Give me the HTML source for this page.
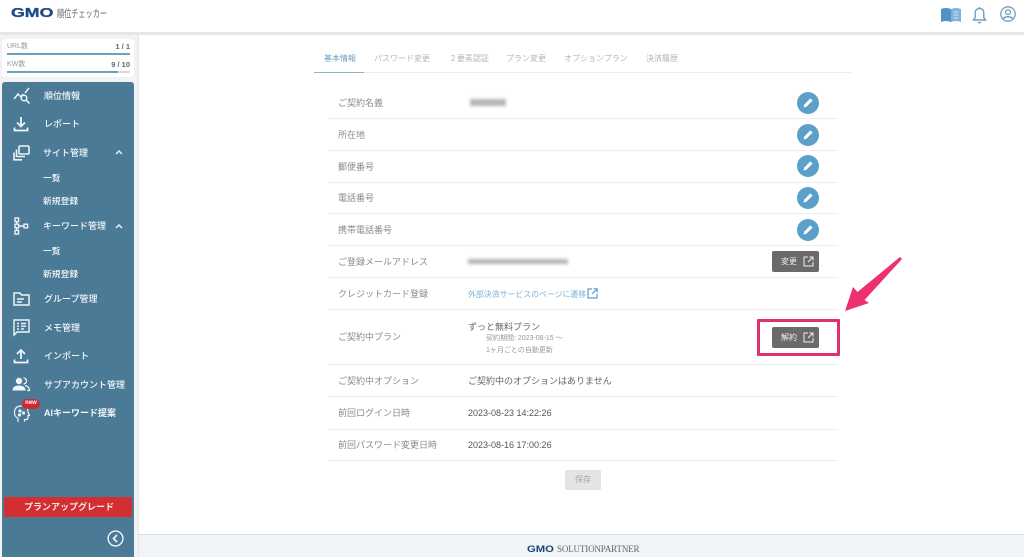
<!DOCTYPE html>
<html lang="ja"><head><meta charset="utf-8"><title>GMO順位チェッカー</title>
<style>
*{box-sizing:border-box}
html,body{margin:0;padding:0}
body{width:1024px;height:557px;overflow:hidden;position:relative;background:#fff;font-family:"Liberation Sans","Noto Sans CJK JP",sans-serif;color:#777}
.t{position:absolute;white-space:nowrap;line-height:12px}
.b{position:absolute;background:#ededed;height:1px;left:328px;width:510px}
.l{left:338px;font-size:9px;color:#8a8a8a}
.v{left:468px;font-size:9px;color:#555}
.tab{top:53px;font-size:8px;color:#b5b5b5}
.m{color:#f2f6f8;font-size:9px;font-weight:500}
.s{color:#f2f6f8;font-size:8.8px;font-weight:500}
svg{position:absolute;overflow:visible}
.pen{position:absolute;width:22px;height:22px;left:797px;border-radius:50%;background:#5c9fc9}
.btn{position:absolute;left:772px;width:47px;height:21px;background:#6a6a6a;border-radius:2px;color:#eee;font-size:8px;line-height:21px;padding-left:9px}
.blur{position:absolute;filter:blur(1.6px);background:#b5b5b5}
</style></head><body>

<!-- top bar -->
<div style="position:absolute;left:0;top:0;width:1024px;height:32px;background:#fff"></div>
<div style="position:absolute;left:0;top:32px;width:1024px;height:3px;background:#e3e7ea"></div>
<div class="t" style="left:11px;top:5px;font-size:12.5px;line-height:16px;font-weight:700;color:#1f4a83;-webkit-text-stroke:.3px #1f4a83;transform:scaleX(1.42);transform-origin:left">GMO</div>
<div class="t" style="left:57px;top:8px;font-size:10.5px;color:#666;transform:scaleX(.68);transform-origin:left">順位チェッカー</div>

<svg style="left:941px;top:7px" width="20" height="16" viewBox="0 0 20 16"><path d="M0 2 Q5 0 10 2 V15 Q5 13 0 15Z" fill="#4f94c4"/><path d="M10 2 Q15 0 20 2 V15 Q15 13 10 15Z" fill="#7fb3d6"/><path d="M12.5 5h5M12.5 8h5M12.5 11h5" stroke="#d5e6f1" stroke-width="1"/></svg>
<svg style="left:972px;top:6px" width="15" height="18" viewBox="0 0 15 18" fill="none" stroke="#6f9fbd" stroke-width="1.4"><path d="M1.5 14 H13.5 L11.8 11.5 V7 Q11.8 2.6 7.5 2.6 Q3.2 2.6 3.2 7 V11.5Z"/><path d="M6 16 Q7.5 17.6 9 16" /><path d="M7.5 1v1.5"/></svg>
<svg style="left:1000px;top:6px" width="16" height="16" viewBox="0 0 16 16" fill="none" stroke="#6f9fbd" stroke-width="1.3"><circle cx="8" cy="8" r="7.2"/><circle cx="8" cy="6.2" r="2.4"/><path d="M3 12.6 Q8 8.8 13 12.6"/></svg>

<!-- left column bg -->
<div style="position:absolute;left:0;top:35px;width:138px;height:522px;background:#f1f3f4"></div>
<div style="position:absolute;left:138px;top:35px;width:1px;height:522px;background:#e4e7e9"></div>

<!-- counters -->
<div style="position:absolute;left:2px;top:39px;width:132px;height:38px;background:#fff;border-radius:3px"></div>
<div class="t" style="left:7px;top:41px;font-size:7px;color:#999">URL数</div>
<div class="t" style="right:894px;top:41px;font-size:7.5px;font-weight:700;color:#666">1 / 1</div>
<div style="position:absolute;left:7px;top:52.5px;width:123px;height:2px;background:#6fa0bb"></div>
<div class="t" style="left:7px;top:59px;font-size:7px;color:#999">KW数</div>
<div class="t" style="right:894px;top:59px;font-size:7.5px;font-weight:700;color:#666">9 / 10</div>
<div style="position:absolute;left:7px;top:70.5px;width:111px;height:2px;background:#6fa0bb"></div>
<div style="position:absolute;left:118px;top:70.5px;width:12px;height:2px;background:#d9d9d9"></div>

<!-- sidebar -->
<div style="position:absolute;left:2px;top:82px;width:132px;height:475px;background:#4a7a96;border-radius:3px 3px 0 0"></div>

<svg style="left:13px;top:87px" width="18" height="18" viewBox="0 0 18 18" fill="none" stroke="#eef4f7" stroke-width="1.5"><path d="M1 12 L5 7 L8 10 L10 7"/><path d="M12 6 L16 1"/><circle cx="11" cy="11" r="2.8"/><path d="M13 13 L16.5 16.5"/></svg>
<div class="t m" style="left:44px;top:90px">順位情報</div>

<svg style="left:13px;top:116px" width="16" height="16" viewBox="0 0 16 16" fill="none" stroke="#eef4f7" stroke-width="1.8"><path d="M8 1v9M4 6.5 8 10.5 12 6.5"/><path d="M1.5 11.5V14.5H14.5V11.5"/></svg>
<div class="t m" style="left:44px;top:118px">レポート</div>

<svg style="left:13px;top:145px" width="17" height="16" viewBox="0 0 17 16" fill="none" stroke="#eef4f7" stroke-width="1.6"><rect x="6" y="1" width="10" height="8" rx="1"/><path d="M3.5 4.5V11.5H12"/><path d="M1 7.5V14.8H9"/></svg>
<div class="t m" style="left:43px;top:147px">サイト管理</div>
<svg style="left:115px;top:150px" width="8" height="5" viewBox="0 0 8 5" fill="none" stroke="#eef4f7" stroke-width="1.4"><path d="M1 4 4 1 7 4"/></svg>
<div class="t s" style="left:43px;top:172px">一覧</div>
<div class="t s" style="left:43px;top:194.5px">新規登録</div>

<svg style="left:14px;top:217px" width="15" height="18" viewBox="0 0 15 18" fill="none" stroke="#eef4f7" stroke-width="1.4"><rect x="1" y="1" width="3.6" height="3.6"/><rect x="1" y="7.2" width="3.6" height="3.6"/><rect x="1" y="13.4" width="3.6" height="3.6"/><rect x="10" y="7.2" width="3.6" height="3.6"/><path d="M2.8 4.6V7.2M2.8 10.8V13.4M4.6 9H10"/></svg>
<div class="t m" style="left:43px;top:220px">キーワード管理</div>
<svg style="left:115px;top:224px" width="8" height="5" viewBox="0 0 8 5" fill="none" stroke="#eef4f7" stroke-width="1.4"><path d="M1 4 4 1 7 4"/></svg>
<div class="t s" style="left:43px;top:245px">一覧</div>
<div class="t s" style="left:43px;top:267.5px">新規登録</div>

<svg style="left:13px;top:292px" width="17" height="14" viewBox="0 0 17 14" fill="none" stroke="#eef4f7" stroke-width="1.5"><path d="M1 1H7L8.5 3H16V13H1Z"/><path d="M4 7H11M4 10H9"/></svg>
<div class="t m" style="left:44px;top:293px">グループ管理</div>

<svg style="left:13px;top:319px" width="17" height="17" viewBox="0 0 17 17" fill="none" stroke="#eef4f7" stroke-width="1.4"><path d="M1 1H16V13H4L1 16Z"/><path d="M4 4.5H6M8 4.5H13M4 7.2H6M8 7.2H13M4 10H6M8 10H11"/></svg>
<div class="t m" style="left:44px;top:321.5px">メモ管理</div>

<svg style="left:13px;top:348px" width="16" height="16" viewBox="0 0 16 16" fill="none" stroke="#eef4f7" stroke-width="1.8"><path d="M8 11V2M4 6 8 2 12 6"/><path d="M1.5 11.5V14.5H14.5V11.5"/></svg>
<div class="t m" style="left:44px;top:350px">インポート</div>

<svg style="left:12px;top:377px" width="18" height="14" viewBox="0 0 18 14" fill="#eef4f7"><circle cx="7" cy="4" r="3.2"/><path d="M0.5 13.5 Q0.5 8.5 7 8.5 Q13.5 8.5 13.5 13.5Z"/><path d="M11.5 1 A3 3 0 0 1 11.5 7" fill="none" stroke="#eef4f7" stroke-width="1.3"/><path d="M13 8.5 Q17.5 9.5 17.5 13.5H15" fill="none" stroke="#eef4f7" stroke-width="1.3"/></svg>
<div class="t m" style="left:44px;top:378.5px">サブアカウント管理</div>

<svg style="left:13px;top:404px" width="17" height="20" viewBox="0 0 17 20" fill="none" stroke="#eef4f7" stroke-width="1.2"><path d="M5 18V14.5Q1 12 1.5 8Q2 2 8.5 2Q15 2 15 8L16.5 11.5H15V14Q15 15.5 13 15.5H11.5V18" stroke-dasharray="22 2"/><circle cx="7" cy="7" r="1" fill="#eef4f7"/><circle cx="10.5" cy="9" r="1" fill="#eef4f7"/><circle cx="6.5" cy="11" r="1" fill="#eef4f7"/></svg>
<div style="position:absolute;left:22px;top:399px;width:18px;height:9.5px;border-radius:5px;background:#cc2b33;color:#fff;font-size:6px;line-height:9px;text-align:center;font-weight:700">new</div>
<div class="t m" style="left:44px;top:407px;font-weight:700;font-size:9px">AIキーワード提案</div>

<div style="position:absolute;left:4px;top:497px;width:128px;height:20px;background:#d32f33;border-radius:2px;color:#f8e8e8;font-size:9px;font-weight:700;line-height:20px;padding-left:20px;white-space:nowrap">プランアップグレード</div>

<svg style="left:107px;top:530px" width="17" height="17" viewBox="0 0 17 17" fill="none" stroke="#f2f6f8" stroke-width="1.4"><circle cx="8.5" cy="8.5" r="7.4"/><path d="M10 5 6.5 8.5 10 12" stroke-width="1.7"/></svg>

<!-- tabs -->
<div class="t tab" style="left:324px;color:#6c9fbe">基本情報</div>
<div class="t tab" style="left:374px">パスワード変更</div>
<div class="t tab" style="left:449px">２要素認証</div>
<div class="t tab" style="left:506px">プラン変更</div>
<div class="t tab" style="left:564px">オプションプラン</div>
<div class="t tab" style="left:646px">決済履歴</div>
<div style="position:absolute;left:314px;top:72px;width:538px;height:1px;background:#eee"></div>
<div style="position:absolute;left:314px;top:71.5px;width:50px;height:1.5px;background:#8db6cd"></div>

<!-- rows -->
<div class="b" style="top:118px"></div><div class="b" style="top:150px"></div><div class="b" style="top:182px"></div><div class="b" style="top:213px"></div><div class="b" style="top:245px"></div><div class="b" style="top:277px"></div><div class="b" style="top:309px"></div><div class="b" style="top:364px"></div><div class="b" style="top:396px"></div><div class="b" style="top:429px"></div><div class="b" style="top:460px"></div>

<div class="t l" style="top:97px">ご契約名義</div>
<div class="blur" style="left:470px;top:99px;width:36px;height:7px"></div>
<div class="t l" style="top:129px">所在地</div>
<div class="t l" style="top:161px">郵便番号</div>
<div class="t l" style="top:192px">電話番号</div>
<div class="t l" style="top:224px">携帯電話番号</div>
<div class="t l" style="top:256px">ご登録メールアドレス</div>
<div class="blur" style="left:468px;top:259px;width:100px;height:5px"></div>
<div class="t l" style="top:288px">クレジットカード登録</div>
<div class="t" style="left:468px;top:289px;font-size:7.9px;color:#7fb2d3">外部決済サービスのページに遷移</div>
<svg style="left:587px;top:288px" width="11" height="11" viewBox="0 0 11 11" fill="none" stroke="#5c9fc9" stroke-width="1.2"><path d="M5 1H1V10H10V6"/><path d="M6.5 .8H10.2V4.5M10 1 5 6"/></svg>
<div class="t l" style="top:331px">ご契約中プラン</div>
<div class="t" style="left:468px;top:321px;font-size:9px;color:#666">ずっと無料プラン</div>
<div class="t" style="left:486px;top:333px;font-size:7px;color:#999">契約期間: 2023-08-15 ～</div>
<div class="t" style="left:486px;top:344.5px;font-size:7px;color:#999">1ヶ月ごとの自動更新</div>
<div class="t l" style="top:375px">ご契約中オプション</div>
<div class="t v" style="top:375px;color:#666">ご契約中のオプションはありません</div>
<div class="t l" style="top:407px">前回ログイン日時</div>
<div class="t v" style="top:407px">2023-08-23 14:22:26</div>
<div class="t l" style="top:439px">前回パスワード変更日時</div>
<div class="t v" style="top:439px">2023-08-16 17:00:26</div>

<!-- edit buttons -->
<div class="pen" style="top:92px"></div><div class="pen" style="top:124px"></div><div class="pen" style="top:155px"></div><div class="pen" style="top:187px"></div><div class="pen" style="top:219px"></div>
<svg style="left:797px;top:92px" width="22" height="22" viewBox="0 0 22 22"><path d="M6.5 15.5 L7.2 12.6 L13.4 6.4 L15.6 8.6 L9.4 14.8Z" fill="#fff"/></svg>
<svg style="left:797px;top:124px" width="22" height="22" viewBox="0 0 22 22"><path d="M6.5 15.5 L7.2 12.6 L13.4 6.4 L15.6 8.6 L9.4 14.8Z" fill="#fff"/></svg>
<svg style="left:797px;top:155px" width="22" height="22" viewBox="0 0 22 22"><path d="M6.5 15.5 L7.2 12.6 L13.4 6.4 L15.6 8.6 L9.4 14.8Z" fill="#fff"/></svg>
<svg style="left:797px;top:187px" width="22" height="22" viewBox="0 0 22 22"><path d="M6.5 15.5 L7.2 12.6 L13.4 6.4 L15.6 8.6 L9.4 14.8Z" fill="#fff"/></svg>
<svg style="left:797px;top:219px" width="22" height="22" viewBox="0 0 22 22"><path d="M6.5 15.5 L7.2 12.6 L13.4 6.4 L15.6 8.6 L9.4 14.8Z" fill="#fff"/></svg>

<div class="btn" style="top:251px;left:772px">変更</div>
<svg style="left:803px;top:256px" width="11" height="11" viewBox="0 0 11 11" fill="none" stroke="#eee" stroke-width="1"><path d="M5 1H1V10H10V6"/><path d="M6.5 1H10V4.5M10 1 5 6"/></svg>
<div class="btn" style="top:327px;left:772px">解約</div>
<svg style="left:803px;top:332px" width="11" height="11" viewBox="0 0 11 11" fill="none" stroke="#eee" stroke-width="1"><path d="M5 1H1V10H10V6"/><path d="M6.5 1H10V4.5M10 1 5 6"/></svg>

<!-- annotations -->
<div style="position:absolute;left:757px;top:319px;width:83px;height:37px;border:3.5px solid #e0306f;border-radius:1px"></div>
<svg style="left:840px;top:252px" width="66" height="64" viewBox="0 0 66 64"><path d="M60 5 L62 7 L24.5 48 L29 51 L5 59 L13 35 L17.5 40Z" fill="#ee2f70"/></svg>

<div style="position:absolute;left:565px;top:470px;width:36px;height:20px;background:#e4e4e4;border-radius:2px;color:#a6a6a6;font-size:8px;line-height:20px;text-align:center">保存</div>

<!-- footer -->
<div style="position:absolute;left:139px;top:534px;width:885px;height:23px;background:#f0f4f7;border-top:1.5px solid #d8dde2"></div>
<div class="t" style="left:527px;top:543px;font-size:9px;font-weight:700;color:#1f3f70;transform:scaleX(1.25);transform-origin:left">GMO</div>
<div class="t" style="left:557px;top:543px;font-family:'Liberation Serif','Noto Serif CJK SC',serif;font-size:9px;color:#666;letter-spacing:-.15px">SOLUTIONPARTNER</div>
</body></html>
